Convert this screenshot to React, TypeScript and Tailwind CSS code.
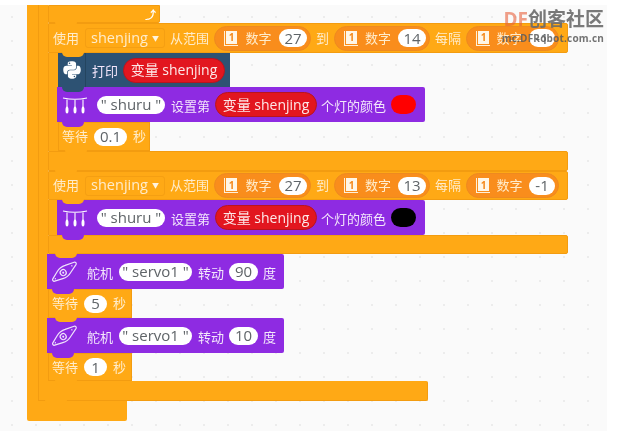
import type { ReactNode } from "react";
import { FaPython } from "react-icons/fa";

const ORANGE = "bg-[#ffa915] border border-[#f39c10]";
const PURPLE = "bg-[#8e2be2]";
const PYTHON = "bg-[#2d5273]";

function Tab({ color, left }: { color: string; left: number }) {
  return (
    <div
      className={`absolute -bottom-[5px] z-10 h-[5px] w-[22px] rounded-b-[5px] ${color}`}
      style={{ left }}
    />
  );
}

function Label({ children, light }: { children: ReactNode; light?: boolean }) {
  return (
    <span className={`shrink-0 whitespace-nowrap text-[13px] leading-none ${light ? "text-[#ffeccb]" : "text-[#f3e6fb]"}`}>
      {children}
    </span>
  );
}

function Value({ children, width }: { children: ReactNode; width: number }) {
  return (
    <span
      className="flex h-[18px] shrink-0 items-center justify-center rounded-full bg-white text-[15px] leading-none text-[#5f6468]"
      style={{ width }}
    >
      {children}
    </span>
  );
}

function Variable({ width = 102 }: { width?: number }) {
  return (
    <span
      className="flex h-[25px] shrink-0 items-center justify-center rounded-full border border-[#b9141e] bg-[#e2161f] text-[14px] leading-none text-[#fde9e9]"
      style={{ width }}
    >
      变量 shenjing
    </span>
  );
}

function BookIcon() {
  return (
    <span className="relative flex h-[15px] w-[14px] shrink-0 items-start justify-end border-b border-l border-[#fff0d8] pb-[1px] pr-[1px]">
      <span className="flex h-[13px] w-[11px] items-center justify-center bg-[#fff6e6] text-[10px] font-bold leading-none text-[#f58a1c]">
        1
      </span>
    </span>
  );
}

function NumberPill({ value, width, valueWidth }: { value: string; width: number; valueWidth: number }) {
  return (
    <span
      className="flex h-[25px] shrink-0 items-center justify-between rounded-full border border-[#ee8a20] bg-[#f98d1c] pl-[9px] pr-[3px]"
      style={{ width }}
    >
      <BookIcon />
      <Label light>数字</Label>
      <Value width={valueWidth}>{value}</Value>
    </span>
  );
}

function LoopHeader({ to, height }: { to: string; height: number }) {
  return (
    <div className={`relative flex w-[520px] items-center gap-[5px] rounded-r-[2px] pl-[4px] ${ORANGE}`} style={{ height }}>
      <Label light>使用</Label>
      <span className="ml-px flex h-[20px] w-[80px] items-center justify-center gap-[4px] rounded-[3px] border border-[#f59f12] text-[14.5px] leading-none text-[#ffeccb]">
        shenjing
        <span className="text-[7px] text-[#fff4de]">▼</span>
      </span>
      <Label light>从范围</Label>
      <NumberPill value="27" width={97} valueWidth={28} />
      <Label light>到</Label>
      <NumberPill value={to} width={96} valueWidth={28} />
      <Label light>每隔</Label>
      <NumberPill value="-1" width={93} valueWidth={26} />
      <Tab color="bg-[#ffa915]" left={13} />
    </div>
  );
}

function LoopFoot({ height }: { height: number }) {
  return (
    <div className={`relative w-[520px] rounded-r-[2px] ${ORANGE}`} style={{ height }}>
      <Tab color="bg-[#ffa915]" left={6} />
    </div>
  );
}

function LightsIcon() {
  return (
    <svg width="26" height="20" viewBox="0 0 26 20" fill="none" stroke="#fff" strokeWidth="1.1" className="shrink-0">
      <path d="M1 3 Q13 5.500 25 3" />
      <path d="M5 4.500v8M13 5v8M21 4.500v8" />
      <ellipse cx="5" cy="15" rx="1.500" ry="3.500" fill="#fff" stroke="none" />
      <ellipse cx="13" cy="15" rx="1.500" ry="3.500" fill="#fff" stroke="none" />
      <ellipse cx="21" cy="15" rx="1.500" ry="3.500" fill="#fff" stroke="none" />
    </svg>
  );
}

function ServoIcon() {
  return (
    <svg width="26" height="24" viewBox="0 0 26 24" fill="none" stroke="#efe4fb" strokeWidth="1.2" className="shrink-0">
      <g transform="rotate(-38 12 12)">
        <path d="M-1 10.500L7 7.500Q12 5.500 17 7.500L26 10.500A1.600 1.600 0 0 1 26 13.500L17 16.500Q12 18.500 7 16.500L-1 13.500A1.600 1.600 0 0 1 -1 10.500Z" />
        <circle cx="11" cy="12" r="3" />
        <circle cx="11" cy="12" r="1" fill="#efe4fb" stroke="none" />
        <circle cx="1" cy="12" r=".7" fill="#efe4fb" stroke="none" />
        <circle cx="22" cy="12" r=".7" fill="#efe4fb" stroke="none" />
      </g>
    </svg>
  );
}

function NeoPixelBlock({ color }: { color: string }) {
  return (
    <div className={`relative -ml-px flex h-[35px] w-[368px] items-center rounded-r-[2px] pl-[5px] ${PURPLE}`}>
      <LightsIcon />
      <span className="ml-[9px]">
        <Value width={68}>" shuru "</Value>
      </span>
      <span className="ml-[6px]">
        <Label>设置第</Label>
      </span>
      <span className="ml-[5px]">
        <Variable />
      </span>
      <span className="ml-[4px]">
        <Label>个灯的颜色</Label>
      </span>
      <span className={`ml-[5px] h-[19px] w-[25px] rounded-full ${color}`} />
      <Tab color={PURPLE} left={5} />
    </div>
  );
}

function ServoBlock({ angle }: { angle: string }) {
  return (
    <div className={`relative -ml-px flex h-[35px] w-[237px] items-center rounded-r-[2px] pl-[5px] ${PURPLE}`}>
      <ServoIcon />
      <span className="ml-[9px]">
        <Label>舵机</Label>
      </span>
      <span className="ml-[6px]">
        <Value width={73}>" servo1 "</Value>
      </span>
      <span className="ml-[6px]">
        <Label>转动</Label>
      </span>
      <span className="ml-[5px]">
        <Value width={29}>{angle}</Value>
      </span>
      <span className="ml-[5px]">
        <Label>度</Label>
      </span>
      <Tab color={PURPLE} left={5} />
    </div>
  );
}

function WaitBlock({ value, width, pillWidth, height }: { value: string; width: number; pillWidth: number; height: number }) {
  return (
    <div className={`relative flex items-center gap-[6px] pl-[3px] ${ORANGE}`} style={{ width, height }}>
      <Label light>等待</Label>
      <Value width={pillWidth}>{value}</Value>
      <Label light>秒</Label>
      <Tab color="bg-[#ffa915]" left={6} />
    </div>
  );
}

export default function App() {
  return (
    <div className="relative flex h-[431px] w-[629px] flex-col overflow-hidden bg-white blur-[0.4px] [font-family:'Open_Sans','Noto_Sans_CJK_SC',sans-serif]">
      <div className="h-[5px] shrink-0 bg-white" />
      <div className="w-[607px] flex-1 bg-[#fafafa] bg-[radial-gradient(#ececec_1px,transparent_1px)] bg-[size:24px_24px] pl-[27px]">
        <div className="flex w-[401px] flex-col">
          <div className="flex">
            <div className="w-[11px] shrink-0 bg-[#ffa915]" />
            <div className="flex flex-col">
              <div className="flex">
                <div className="w-[10px] shrink-0 border-l border-[#f39c10] bg-[#ffa915]" />
                <div className="flex flex-col">
                  <div className={`relative flex h-[18px] w-[112px] items-center justify-end rounded-br-[2px] pr-[3px] ${ORANGE}`}>
                    <span className="text-[11px] font-bold leading-none text-white">⤴</span>
                    <Tab color="bg-[#ffa915]" left={6} />
                  </div>

                  <LoopHeader to="14" height={30} />
                  <div className="flex">
                    <div className="w-[10px] shrink-0 border-l border-[#f39c10] bg-[#ffa915]" />
                    <div className="flex flex-col">
                      <div className={`relative flex h-[34px] w-[172px] items-center ${PYTHON}`}>
                        <span className="flex h-full w-[28px] shrink-0 items-center justify-center border-r border-[#244560] text-white">
                          <FaPython size={20} />
                        </span>
                        <span className="ml-[6px]">
                          <Label>打印</Label>
                        </span>
                        <span className="ml-[5px]">
                          <Variable />
                        </span>
                        <Tab color={PYTHON} left={4} />
                      </div>
                      <NeoPixelBlock color="bg-[#ff0000]" />
                      <WaitBlock value="0.1" width={92} pillWidth={33} height={29} />
                    </div>
                  </div>
                  <LoopFoot height={20} />

                  <LoopHeader to="13" height={29} />
                  <div className="flex">
                    <div className="w-[10px] shrink-0 border-l border-[#f39c10] bg-[#ffa915]" />
                    <NeoPixelBlock color="bg-black" />
                  </div>
                  <LoopFoot height={19} />

                  <ServoBlock angle="90" />
                  <WaitBlock value="5" width={84} pillWidth={23} height={29} />
                  <ServoBlock angle="10" />
                  <WaitBlock value="1" width={84} pillWidth={23} height={28} />
                </div>
              </div>
              <div className={`relative h-[20px] w-[390px] rounded-r-[2px] border-t-0 ${ORANGE}`}>
                <Tab color="bg-[#ffa915]" left={6} />
              </div>
            </div>
          </div>
          <div className="h-[20px] w-[100px] rounded-b-[2px] bg-[#ffa915]" />
        </div>
      </div>

      <div className="absolute right-[25px] top-[9px] z-20 flex flex-col items-end">
        <div className="flex items-center text-[19px] font-bold leading-[20px]">
          <span className="text-[#e8603c]/60">DF</span>
          <span className="text-[#6a6a6a]/90">创客社区</span>
        </div>
        <span className="mt-[4px] text-[10px] font-bold leading-none tracking-[0.2px] text-[#5a5a5a]/85">mc.DFRobot.com.cn</span>
      </div>
    </div>
  );
}
